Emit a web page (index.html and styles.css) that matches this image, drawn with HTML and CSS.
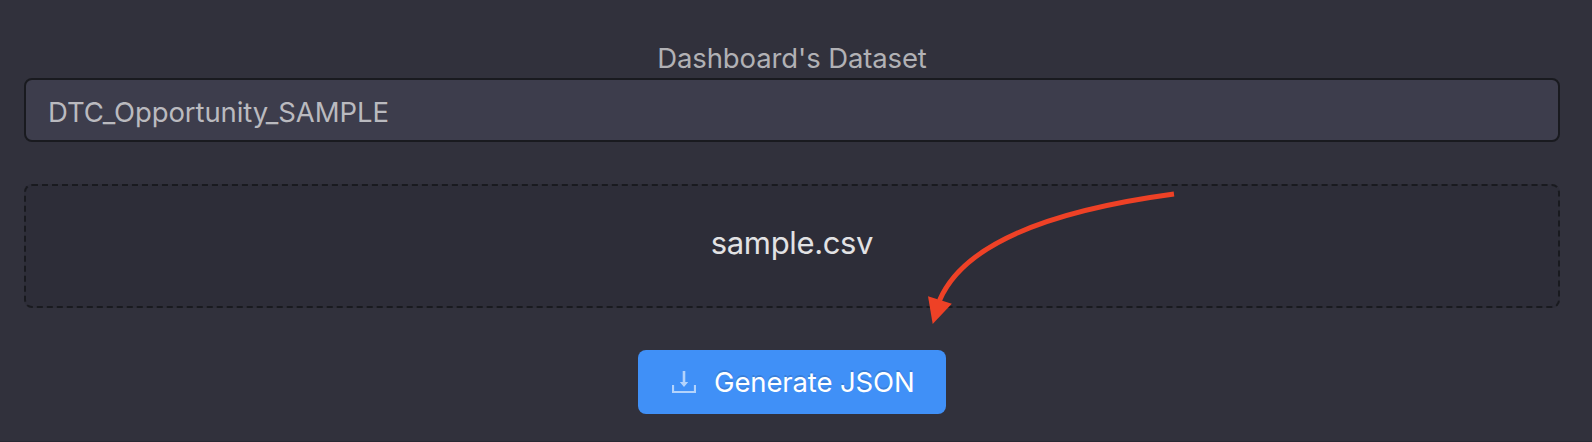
FILE: index.html
```html
<!DOCTYPE html>
<html lang="en">
<head>
<meta charset="utf-8">
<title>Generate JSON</title>
<link rel="stylesheet" href="styles.css">
</head>
<body>
<main class="panel">
  <label class="label" for="dataset">Dashboard's Dataset</label>
  <input class="field" id="dataset" type="text" value="DTC_Opportunity_SAMPLE">
  <div class="dropzone"><span class="filename">sample.csv</span></div>
  <button class="generate" type="button">
    <svg class="icon" width="24" height="22" viewBox="0 0 24 22" aria-hidden="true">
      <path d="M1 14v7h22v-7" fill="none" stroke="currentColor" stroke-width="2.2"/>
      <path d="M10.7 0h2.6v11h2.9l-4.2 5-4.2-5h2.9z" fill="currentColor"/>
    </svg>
    <span class="caption">Generate JSON</span>
  </button>
  <svg class="pointer" width="260" height="140" viewBox="920 190 260 140" aria-hidden="true">
    <path d="M1174 194Q973 221 939.5 300.5" fill="none" stroke="#ee4126" stroke-width="5"/>
    <path d="M928 296.3L951.8 303.7L932.7 324z" fill="#ee4126"/>
  </svg>
</main>
</body>
</html>
```
FILE: styles.css
```css
* {
  box-sizing: border-box;
}

body {
  margin: 0;
  background: #31313c;
  font-family: Inter, "Liberation Sans", sans-serif;
}

.panel {
  position: relative;
  display: flex;
  flex-direction: column;
  align-items: center;
  height: 442px;
  padding: 38px 32px 0 24px;
  border-bottom: 1px solid #292934;
}

.label {
  height: 40px;
  font-size: 27.5px;
  line-height: 40px;
  letter-spacing: -0.12px;
  color: #b1b1b5;
}

.field {
  width: 100%;
  height: 64px;
  padding: 4px 22px 0;
  border: 2px solid #191a1f;
  border-radius: 8px;
  outline: 0;
  background: #3d3d4c;
  font: 27.5px Inter, "Liberation Sans", sans-serif;
  letter-spacing: -0.1px;
  color: #bababf;
}

.dropzone {
  display: flex;
  align-items: center;
  justify-content: center;
  width: 100%;
  height: 124px;
  margin: 42px 0;
  padding-bottom: 7px;
  border: 2px dashed #191a1f;
  border-radius: 8px;
  background: #2d2d38;
}

.filename {
  font-size: 31px;
  line-height: 40px;
  letter-spacing: -0.35px;
  color: #e2e2e4;
}

.generate {
  display: flex;
  align-items: center;
  width: 308px;
  height: 64px;
  padding: 0 0 0 34px;
  border: 0;
  border-radius: 8px;
  background: #4090f7;
  color: #fff;
}

.icon {
  flex: none;
  color: #b3d3fc;
}

.caption {
  margin-left: 18px;
  font: 27.5px/40px Inter, "Liberation Sans", sans-serif;
  letter-spacing: -0.13px;
  text-shadow: 0 -2px 0 rgba(0, 0, 0, 0.12);
  white-space: nowrap;
}

.pointer {
  position: absolute;
  left: 920px;
  top: 190px;
}
```
